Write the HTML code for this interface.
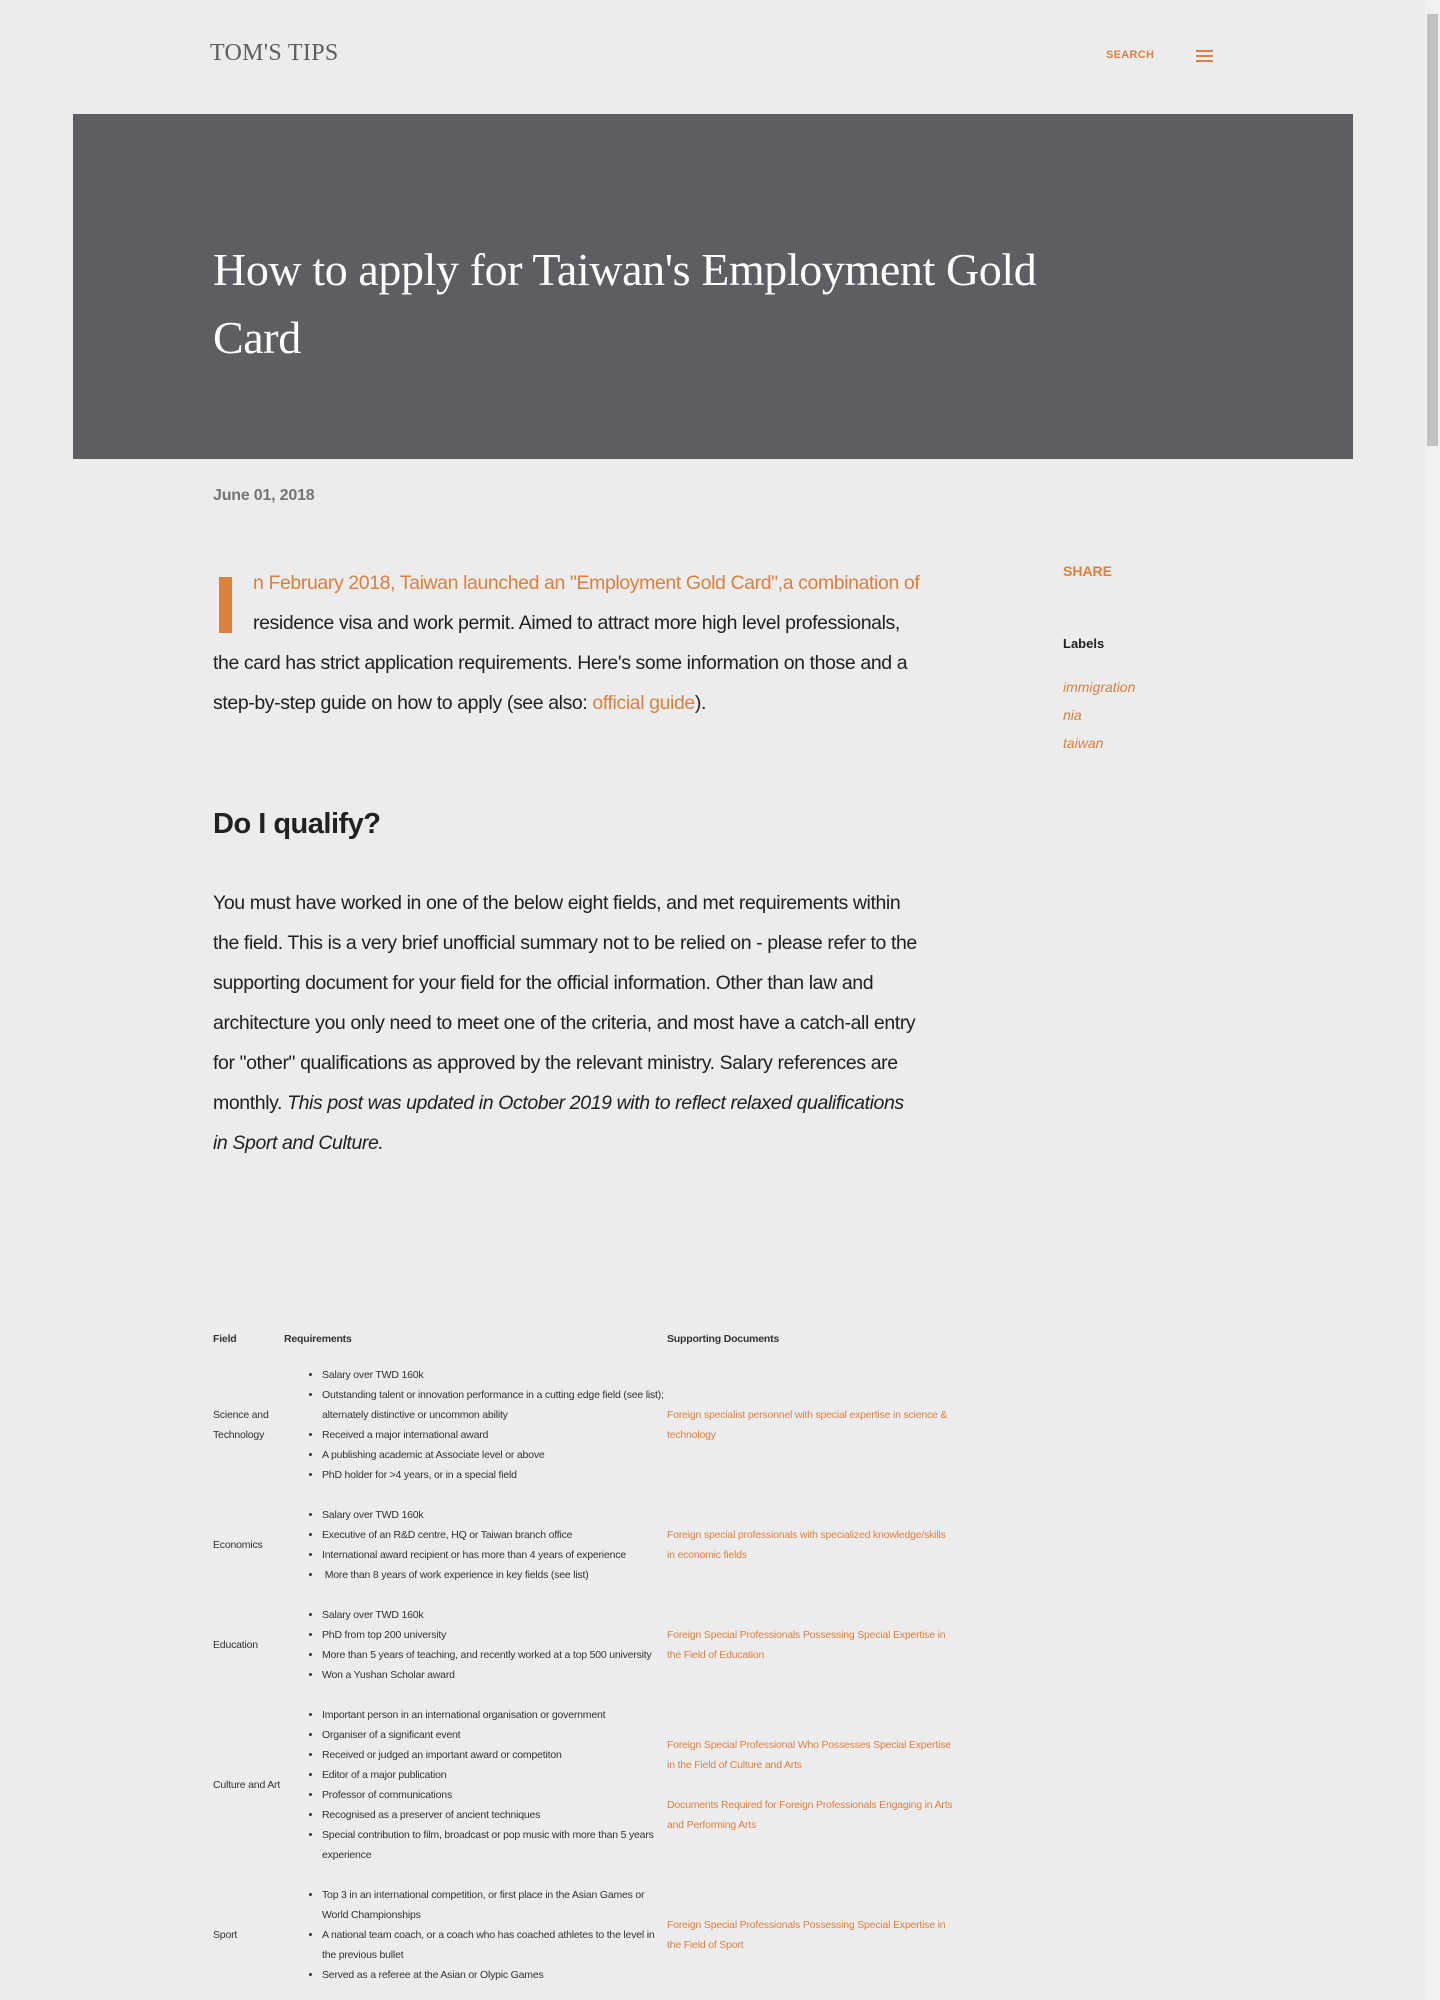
<!DOCTYPE html>
<html><head><meta charset="utf-8"><style>
html,body{margin:0;padding:0;background:#ececec;}
body{width:1440px;height:2000px;position:relative;overflow:hidden;font-family:"Liberation Sans",sans-serif;color:#212121;}
.abs{position:absolute;}
.logo{left:210px;top:40px;font-family:"Liberation Serif",serif;font-size:24px;color:#5e5d62;letter-spacing:0.3px;}
.search{left:1106px;top:49px;font-size:11px;font-weight:bold;color:#dd7f3e;letter-spacing:0.3px;}
.ham{left:1196px;top:50px;width:17px;}
.ham i{display:block;height:2px;background:#dd7f3e;margin-bottom:3px;}
.hero{left:73px;top:114px;width:1280px;height:345px;background:#5e5d62;}
.hero h1{position:absolute;left:140px;top:122px;margin:0;width:920px;font-family:"Liberation Serif",serif;font-weight:normal;font-size:46px;line-height:68px;color:#fff;letter-spacing:-0.4px;}
.date{left:213px;top:487px;font-size:16px;font-weight:bold;color:#757575;letter-spacing:-0.2px;}
.post{left:213px;top:563px;width:735px;font-size:19.5px;line-height:40px;color:#212121;letter-spacing:-0.4px;}
.post p{margin:0;}
.o{color:#dd7f3e;}
.cap{float:left;width:13px;height:56px;background:#dd7f3e;margin:14px 21px 0 6px;}
h2{position:absolute;left:213px;top:808px;margin:0;font-size:29px;font-weight:bold;color:#212121;letter-spacing:-0.5px;}
.p2{left:213px;top:883px;width:745px;font-size:19.5px;line-height:40px;letter-spacing:-0.4px;}
.side{left:1063px;}
table{position:absolute;left:209px;top:1329px;border-collapse:collapse;table-layout:fixed;width:752px;font-size:10.5px;color:#333;letter-spacing:-0.2px;}
td{padding:0 4px;vertical-align:middle;line-height:20px;}
th{text-align:left;padding:0 4px 6px;line-height:20px;font-size:10.5px;}
ul{margin:10px 0;padding-left:38px;}
td a{color:#dd7f3e;}
.doc p{margin:0;}
.sb{left:1425px;top:0;width:15px;height:2000px;background:#f1f1f1;}
.th{left:1427px;top:14px;width:11px;height:432px;background:#c1c1c1;}
</style></head><body>
<div class="abs logo">TOM'S TIPS</div>
<div class="abs search">SEARCH</div>
<div class="abs ham"><i></i><i></i><i></i></div>
<div class="abs hero"><h1>How to apply for Taiwan's Employment Gold Card</h1></div>
<div class="abs date">June 01, 2018</div>
<div class="abs post"><p><span class="cap"></span><span class="o">n February 2018, Taiwan launched an "Employment Gold Card",a combination of</span> residence visa and work permit. Aimed to attract more high level professionals,<br>the card has strict application requirements. Here's some information on those and a<br>step-by-step guide on how to apply (see also: <span class="o">official guide</span>).</p></div>
<h2>Do I qualify?</h2>
<div class="abs p2">You must have worked in one of the below eight fields, and met requirements within<br>the field. This is a very brief unofficial summary not to be relied on - please refer to the<br>supporting document for your field for the official information. Other than law and<br>architecture you only need to meet one of the criteria, and most have a catch-all entry<br>for "other" qualifications as approved by the relevant ministry. Salary references are<br>monthly. <i>This post was updated in October 2019 with to reflect relaxed qualifications<br>in Sport and Culture.</i></div>
<div class="abs side o" style="top:563px;font-size:14px;font-weight:bold;">SHARE</div>
<div class="abs side" style="top:636px;font-size:13px;font-weight:bold;">Labels</div>
<div class="abs side o" style="top:673px;font-size:14px;font-style:italic;line-height:28px;">immigration<br>nia<br>taiwan</div>
<table>
<colgroup><col style="width:71px"><col style="width:383px"><col style="width:298px"></colgroup>
<tr><th>Field</th><th>Requirements</th><th>Supporting Documents</th></tr>
<tr><td>Science and<br>Technology</td><td><ul><li style="white-space:nowrap">Salary over TWD 160k</li><li style="white-space:nowrap">Outstanding talent or innovation performance in a cutting edge field (see list);<br>alternately distinctive or uncommon ability</li><li>Received a major international award</li><li>A publishing academic at Associate level or above</li><li>PhD holder for &gt;4 years, or in a special field</li></ul></td><td class="doc"><a>Foreign specialist personnel with special expertise in science &amp;<br>technology</a></td></tr>
<tr><td>Economics</td><td><ul><li>Salary over TWD 160k</li><li>Executive of an R&amp;D centre, HQ or Taiwan branch office</li><li>International award recipient or has more than 4 years of experience</li><li>&nbsp;More than 8 years of work experience in key fields (see list)</li></ul></td><td class="doc"><a>Foreign special professionals with specialized knowledge/skills<br>in economic fields</a></td></tr>
<tr><td>Education</td><td><ul><li>Salary over TWD 160k</li><li>PhD from top 200 university</li><li style="white-space:nowrap">More than 5 years of teaching, and recently worked at a top 500 university</li><li>Won a Yushan Scholar award</li></ul></td><td class="doc"><a>Foreign Special Professionals Possessing Special Expertise in<br>the Field of Education</a></td></tr>
<tr><td style="white-space:nowrap">Culture and Art</td><td><ul><li>Important person in an international organisation or government</li><li>Organiser of a significant event</li><li>Received or judged an important award or competiton</li><li>Editor of a major publication</li><li>Professor of communications</li><li>Recognised as a preserver of ancient techniques</li><li>Special contribution to film, broadcast or pop music with more than 5 years<br>experience</li></ul></td><td class="doc"><p><a>Foreign Special Professional Who Possesses Special Expertise<br>in the Field of Culture and Arts</a></p><p style="margin-top:20px"><a>Documents Required for Foreign Professionals Engaging in Arts<br>and Performing Arts</a></p></td></tr>
<tr><td>Sport</td><td><ul><li>Top 3 in an international competition, or first place in the Asian Games or<br>World Championships</li><li>A national team coach, or a coach who has coached athletes to the level in<br>the previous bullet</li><li>Served as a referee at the Asian or Olypic Games</li></ul></td><td class="doc"><a>Foreign Special Professionals Possessing Special Expertise in<br>the Field of Sport</a></td></tr>
</table>
<div class="abs sb"></div><div class="abs th"></div>
</body></html>
